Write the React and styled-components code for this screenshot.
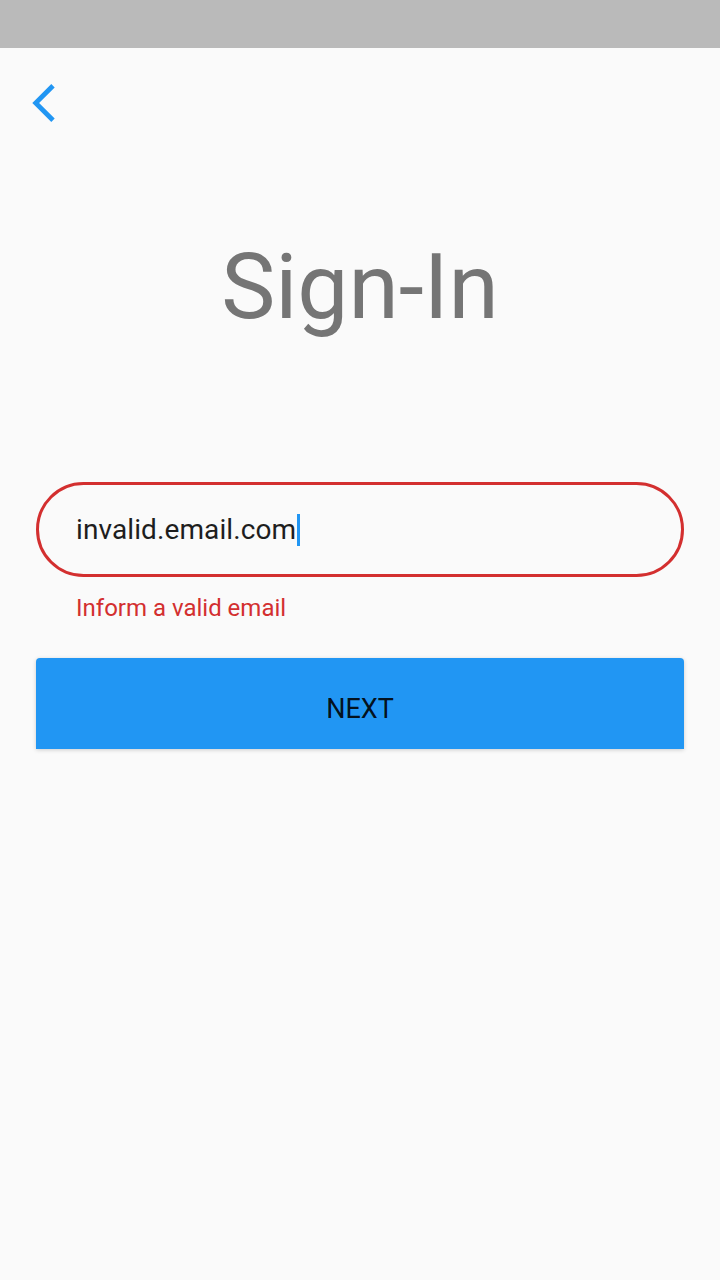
import React from "react";
import styled, { createGlobalStyle } from "styled-components";

const Global = createGlobalStyle`
  html, body { margin: 0; padding: 0; background: #fafafa; }
  body { font-family: Roboto, "Noto Sans", sans-serif; }
  * { box-sizing: border-box; }
`;

const Screen = styled.div`
  width: 720px;
  min-height: 1280px;
  background: #fafafa;
  display: flex;
  flex-direction: column;
`;

const StatusBar = styled.div`
  height: 48px;
  background: #bababa;
  flex-shrink: 0;
`;

const Header = styled.div`
  display: flex;
  align-items: center;
  padding: 36px 0 0 32px;
`;

const BackButton = styled.button`
  border: none;
  background: none;
  padding: 0;
  margin: 0;
  width: 23px;
  height: 38px;
  display: flex;
  cursor: pointer;
`;

const Title = styled.h1`
  margin: 117px 0 0;
  font-family: Roboto, sans-serif;
  font-weight: 400;
  font-size: 91px;
  line-height: 96px;
  color: #757575;
  text-align: center;
`;

const Form = styled.div`
  display: flex;
  flex-direction: column;
  padding: 0 36px;
  margin-top: 147px;
`;

const Field = styled.div`
  height: 95px;
  border: 3px solid ${(p) => (p.$error ? "#d32f2f" : "#2196f3")};
  border-radius: 48px;
  display: flex;
  align-items: center;
  padding-left: 37px;
`;

const Value = styled.span`
  font-size: 28px;
  line-height: 32px;
  color: #1e1e1e;
  letter-spacing: 0.1px;
`;

const Caret = styled.span`
  display: inline-block;
  width: 3px;
  height: 32px;
  background: #2196f3;
  margin-left: 1px;
`;

const ErrorText = styled.div`
  margin-top: 15px;
  padding-left: 40px;
  font-size: 24px;
  line-height: 32px;
  color: #d32f2f;
`;

const NextButton = styled.button`
  margin-top: 34px;
  height: 91px;
  border: none;
  border-radius: 4px 4px 0 0;
  background: #2196f3;
  box-shadow: 0 1px 4px rgba(0, 0, 0, 0.18);
  color: rgba(0, 0, 0, 0.9);
  font-family: Roboto, sans-serif;
  font-size: 27px;
  font-weight: 400;
  padding: 10px 0 0;
  display: flex;
  align-items: center;
  justify-content: center;
  text-transform: uppercase;
`;

export default function App() {
  return (
    <>
      <Global />
      <Screen>
        <StatusBar />
        <Header>
          <BackButton aria-label="Back">
            <svg width="23" height="38" viewBox="0 2.1 11.67 19.8">
              <path
                d="M11.67 3.87L9.9 2.1 0 12l9.9 9.9 1.77-1.77L3.54 12z"
                fill="#2196f3"
              />
            </svg>
          </BackButton>
        </Header>
        <Title>Sign-In</Title>
        <Form>
          <Field $error>
            <Value>invalid.email.com</Value>
            <Caret />
          </Field>
          <ErrorText>Inform a valid email</ErrorText>
          <NextButton>Next</NextButton>
        </Form>
      </Screen>
    </>
  );
}
